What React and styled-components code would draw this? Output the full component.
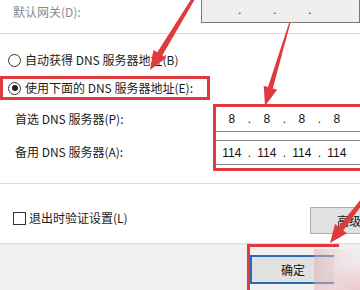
import styled, { createGlobalStyle } from "styled-components";

const GlobalStyle = createGlobalStyle`
  html, body {
    margin: 0;
    padding: 0;
    background: #ffffff;
  }
  body {
    font-family: "Noto Sans CJK SC", "Liberation Sans", sans-serif;
    font-size: 12px;
    color: #1b1b1b;
  }
`;

const RED = "#e03a3e";

const Page = styled.div`
  position: relative;
  width: 360px;
  height: 290px;
  overflow: hidden;
  display: flex;
  flex-direction: column;
  background: #ffffff;
`;

const Main = styled.div`
  height: 245px;
  display: flex;
  flex-direction: column;
`;

const GatewayRow = styled.div`
  display: flex;
  align-items: center;
  height: 24px;
`;

const Label = styled.div`
  width: ${(p) => p.$width || 203}px;
  padding-left: ${(p) => p.$indent || 13}px;
  box-sizing: border-box;
  color: ${(p) => (p.$disabled ? "#8a8a8a" : "#1b1b1b")};
  white-space: nowrap;
  line-height: 16px;
`;

const GatewayBox = styled.div`
  width: 160px;
  height: 23px;
  align-self: flex-start;
  box-sizing: border-box;
  background: #efefef;
  border: 1px solid #7a7a7a;
  border-top: none;
  padding-left: 4px;
  display: flex;
  align-items: center;
`;

const Octet = styled.span`
  width: 32px;
  text-align: center;
  font-family: "Liberation Sans", sans-serif;
  font-size: 12px;
  color: #111;
`;

const Dot = styled.span`
  width: 3px;
  text-align: center;
  font-family: "Liberation Sans", sans-serif;
  font-size: ${(p) => (p.$small ? 9 : 12)}px;
  font-weight: ${(p) => (p.$small ? 700 : 400)};
  color: ${(p) => (p.$small ? "#444" : "#111")};
`;

const Divider = styled.div`
  height: 1px;
  background: #dcdcdc;
  margin-top: ${(p) => p.$top}px;
`;

const RadioRow = styled.div`
  display: flex;
  align-items: center;
  height: 18px;
  padding-left: 8px;
  margin-top: 17px;
  gap: 4px;
`;

const RadioHighlight = styled.div`
  width: 210px;
  height: 24px;
  box-sizing: border-box;
  margin-top: 7px;
  border: 3px solid ${RED};
  display: flex;
  align-items: center;
  padding-left: 5px;
  gap: 4px;
`;

const Radio = styled.span`
  width: 11px;
  height: 11px;
  border: 1px solid #333;
  border-radius: 50%;
  display: flex;
  align-items: center;
  justify-content: center;
  flex-shrink: 0;

  &::after {
    content: "";
    display: ${(p) => (p.$checked ? "block" : "none")};
    width: 6px;
    height: 6px;
    border-radius: 50%;
    background: #222;
  }
`;

const RadioText = styled.span`
  white-space: nowrap;
  line-height: 16px;
`;

const DnsSection = styled.div`
  display: flex;
  margin-top: 4px;
`;

const DnsLabels = styled.div`
  width: 217px;
  display: flex;
  flex-direction: column;
  padding-top: 7px;
`;

const DnsLabel = styled.div`
  height: 16px;
  line-height: 16px;
  padding-left: 15px;
  margin-bottom: 17px;
  white-space: nowrap;
`;

const InputHighlight = styled.div`
  width: 150px;
  height: 67px;
  box-sizing: border-box;
  border: 3px solid ${RED};
  border-right: none;
  display: flex;
  flex-direction: column;
`;

const IpField = styled.div`
  height: ${(p) => p.$height}px;
  margin-top: ${(p) => p.$top || 0}px;
  box-sizing: border-box;
  border-bottom: 1px solid #8a8a8a;
  border-top: ${(p) => (p.$topBorder ? "1px solid #8a8a8a" : "none")};
  display: flex;
  align-items: center;
`;

const CheckRow = styled.div`
  display: flex;
  align-items: flex-start;
  margin-top: 23px;
  padding-left: 13px;
`;

const CheckLabel = styled.label`
  display: flex;
  align-items: center;
  gap: 3px;
  margin-top: 3px;
  width: 297px;
  flex-shrink: 0;
  line-height: 16px;
  white-space: nowrap;
`;

const CheckBox = styled.span`
  width: 11px;
  height: 11px;
  border: 1px solid #333;
  background: #fff;
`;

const Button = styled.button`
  width: ${(p) => p.$width}px;
  height: ${(p) => p.$height}px;
  box-sizing: border-box;
  background: #e1e1e1;
  border: ${(p) => (p.$primary ? "2px solid #2a6db3" : "1px solid #adadad")};
  border-right: ${(p) => (p.$primary ? "none" : "1px solid #adadad")};
  font-family: "Noto Sans CJK SC", sans-serif;
  font-size: 12px;
  color: #111;
  white-space: nowrap;
  padding: 0 0 0 ${(p) => p.$indent || 0}px;
  text-align: ${(p) => (p.$indent ? "left" : "center")};
  flex-shrink: 0;
`;

const Footer = styled.div`
  flex: 1;
  background: #f0f0f0;
  border-top: 1px solid #dcdcdc;
  display: flex;
  padding-left: 247px;
  position: relative;
`;

const FooterHighlight = styled.div`
  width: 92px;
  height: 46px;
  box-sizing: border-box;
  border-top: 3px solid ${RED};
  border-left: 3px solid ${RED};
  padding-top: 8px;
`;

const PinkHaze = styled.div`
  position: absolute;
  left: 314px;
  top: 5px;
  right: 0;
  bottom: 0;
  background:
    radial-gradient(ellipse 40px 30px at 100% 100%, rgba(220, 120, 135, 0.3), rgba(220, 120, 135, 0) 100%),
    linear-gradient(90deg, rgba(226, 170, 178, 0.5), rgba(240, 215, 219, 0.45) 60%, rgba(246, 230, 232, 0.35));
`;

const ArrowLayer = styled.svg`
  position: absolute;
  left: 0;
  top: 0;
  width: 360px;
  height: 290px;
  pointer-events: none;
`;

function arrowPoints(tail, tip, tailW, baseW, headLen, headW) {
  const dx = tip[0] - tail[0];
  const dy = tip[1] - tail[1];
  const len = Math.hypot(dx, dy);
  const ux = dx / len;
  const uy = dy / len;
  const px = -uy;
  const py = ux;
  const bx = tip[0] - ux * headLen;
  const by = tip[1] - uy * headLen;
  const pts = [
    [tail[0] + px * tailW / 2, tail[1] + py * tailW / 2],
    [bx + px * baseW / 2, by + py * baseW / 2],
    [bx + px * headW / 2, by + py * headW / 2],
    tip,
    [bx - px * headW / 2, by - py * headW / 2],
    [bx - px * baseW / 2, by - py * baseW / 2],
    [tail[0] - px * tailW / 2, tail[1] - py * tailW / 2],
  ];
  return pts.map((p) => p.map((v) => v.toFixed(1)).join(",")).join(" ");
}

const IpValue = ({ parts, smallDots }) => (
  <>
    <Octet>{parts[0]}</Octet>
    <Dot $small={smallDots}>.</Dot>
    <Octet>{parts[1]}</Octet>
    <Dot $small={smallDots}>.</Dot>
    <Octet>{parts[2]}</Octet>
    <Dot $small={smallDots}>.</Dot>
    <Octet>{parts[3]}</Octet>
  </>
);

export default function App() {
  return (
    <>
      <GlobalStyle />
      <Page>
        <Main>
          <GatewayRow>
            <Label $disabled>默认网关(D):</Label>
            <GatewayBox>
              <IpValue parts={["", "", "", ""]} smallDots />
            </GatewayBox>
          </GatewayRow>
          <Divider $top={9} />

          <RadioRow>
            <Radio />
            <RadioText>自动获得 DNS 服务器地址(B)</RadioText>
          </RadioRow>
          <RadioHighlight>
            <Radio $checked />
            <RadioText>使用下面的 DNS 服务器地址(E):</RadioText>
          </RadioHighlight>

          <DnsSection>
            <DnsLabels>
              <DnsLabel>首选 DNS 服务器(P):</DnsLabel>
              <DnsLabel>备用 DNS 服务器(A):</DnsLabel>
            </DnsLabels>
            <InputHighlight>
              <IpField $height={25}>
                <IpValue parts={["8", "8", "8", "8"]} />
              </IpField>
              <IpField $height={25} $top={8} $topBorder>
                <IpValue parts={["114", "114", "114", "114"]} />
              </IpField>
            </InputHighlight>
          </DnsSection>
          <Divider $top={6} />

          <CheckRow>
            <CheckLabel>
              <CheckBox />
              退出时验证设置(L)
            </CheckLabel>
            <Button $width={75} $height={27} $indent={26}>
              高级
            </Button>
          </CheckRow>
        </Main>

        <Footer>
          <FooterHighlight>
            <Button $primary $width={84} $height={29}>
              确定
            </Button>
          </FooterHighlight>
          <PinkHaze />
        </Footer>

        <ArrowLayer viewBox="0 0 360 290">
          <polygon fill={RED} points={arrowPoints([195, -4], [150, 70], 3, 6, 19, 15)} />
          <polygon fill={RED} points={arrowPoints([290, 22], [265, 106], 1.2, 5, 19, 14)} />
          <polygon fill={RED} points={arrowPoints([366, 196], [330, 243], 4, 6, 18, 15)} />
        </ArrowLayer>
      </Page>
    </>
  );
}
